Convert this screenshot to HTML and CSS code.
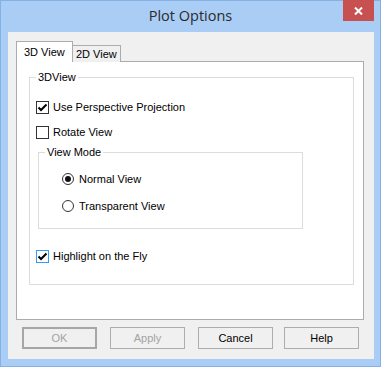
FILE: index.html
```html
<!DOCTYPE html>
<html>
<head>
<meta charset="utf-8">
<link rel="stylesheet" href="styles.css">
</head>
<body>
<div class="window">
  <div class="titlebar">
    <span></span>
    <span class="title">Plot Options</span>
    <span class="close"><svg width="9" height="8" viewBox="0 0 9 8"><path d="M1 0.5 L8 7.5 M8 0.5 L1 7.5" stroke="#fff" stroke-width="2"/></svg></span>
  </div>
  <div class="client">
    <div class="tabs">
      <div class="tab active">3D View</div>
      <div class="tab">2D View</div>
    </div>
    <div class="panel">
      <div class="group g1">
        <span class="gtitle">3DView</span>
        <label class="row r1"><span class="cb"><svg width="13" height="13" viewBox="0 0 13 13"><rect x="0.5" y="0.5" width="12" height="12" fill="#fff" stroke="#333"/><path d="M2.5 6.5 L5 9 L10.5 3.5" fill="none" stroke="#000" stroke-width="2"/></svg></span>Use Perspective Projection</label>
        <label class="row r2"><span class="cb"><svg width="13" height="13" viewBox="0 0 13 13"><rect x="0.5" y="0.5" width="12" height="12" fill="#fff" stroke="#333"/></svg></span>Rotate View</label>
        <div class="group g2">
          <span class="gtitle">View Mode</span>
          <label class="row rr1"><span class="rb"><svg width="12" height="12" viewBox="0 0 12 12"><circle cx="6" cy="6" r="5.5" fill="#fff" stroke="#333"/><circle cx="6" cy="6" r="3" fill="#111"/></svg></span>Normal View</label>
          <label class="row rr2"><span class="rb"><svg width="12" height="12" viewBox="0 0 12 12"><circle cx="6" cy="6" r="5.5" fill="#fff" stroke="#333"/></svg></span>Transparent View</label>
        </div>
        <label class="row r3"><span class="cb"><svg width="13" height="13" viewBox="0 0 13 13"><rect x="0.5" y="0.5" width="12" height="12" fill="#fff" stroke="#3399ff"/><path d="M2.5 6.5 L5 9 L10.5 3.5" fill="none" stroke="#000" stroke-width="2"/></svg></span>Highlight on the Fly</label>
      </div>
    </div>
    <div class="buttons">
      <div class="btn default disabled">OK</div>
      <div class="btn disabled">Apply</div>
      <div class="btn">Cancel</div>
      <div class="btn help">Help</div>
    </div>
  </div>
</div>
</body>
</html>
```
FILE: styles.css
```css
* { box-sizing: border-box; }
html, body { margin: 0; padding: 0; background: #fff; }
body { font-family: "Liberation Sans", Arial, sans-serif; font-size: 11px; color: #000; }
.window {
  width: 381px; height: 367px;
  background: #a9cdf4;
  border: 1px solid #85b2e3;
  display: flex; flex-direction: column;
}
.titlebar {
  height: 31px;
  display: grid;
  grid-template-columns: 1fr auto 1fr;
  align-items: start;
}
.title {
  font-family: "Open Sans", "Noto Sans", sans-serif;
  font-size: 14.5px;
  color: #2b2b2b;
  line-height: 20px;
  margin-top: 5px;
}
.close {
  justify-self: end;
  margin-right: 6px;
  margin-top: -1px;
  width: 31px; height: 21px;
  background: #c75050;
  display: flex; align-items: center; justify-content: center;
}
.close svg { display: block; }
.client {
  margin: 0 6px 0 7px;
  height: 327px;
  background: #f0f0f0;
  padding: 9px 0 0 8px;
}
.tabs {
  display: flex;
  align-items: flex-end;
  height: 21px;
  position: relative;
  z-index: 1;
}
.tab {
  height: 17px;
  width: 48px;
  border: 1px solid #acacac;
  border-bottom: none;
  border-left: none;
  background: #f0f0f0;
  padding-left: 3px;
  line-height: 16px;
}
.tab.active {
  height: 21px;
  width: 57px;
  border-left: 1px solid #acacac;
  background: #fff;
  padding-left: 7px;
  line-height: 20px;
}
.panel {
  margin-top: -1px;
  width: 348px;
  height: 259px;
  background: #fff;
  border: 1px solid #acacac;
  padding: 15px 0 0 12px;
}
.group {
  position: relative;
  border: 1px solid #dcdcdc;
}
.gtitle {
  position: absolute;
  top: -7px;
  left: 6px;
  padding: 0 2px;
  background: #fff;
  line-height: 13px;
}
.g1 {
  width: 325px;
  padding: 23px 0 21px 0;
  display: flex; flex-direction: column;
}
.g2 {
  width: 265px;
  margin-left: 8px;
  margin-top: 13px;
  padding: 20px 0 16px 23px;
  display: flex; flex-direction: column;
}
.row {
  display: flex;
  align-items: center;
  height: 13px;
  line-height: 13px;
  white-space: nowrap;
}
.r1, .r2, .r3 { margin-left: 6px; }
.r2 { margin-top: 12px; }
.r3 { margin-top: 21px; }
.rr1, .rr2 { height: 12px; }
.rr2 { margin-top: 15px; }
.cb { width: 13px; height: 13px; margin-right: 4px; }
.rb { width: 12px; height: 12px; margin-right: 5px; }
.cb svg, .rb svg { display: block; }
.buttons {
  display: flex;
  gap: 13px;
  margin-top: 7px;
  padding-left: 6px;
}
.btn {
  width: 75px; height: 22px;
  border: 1px solid #adadad;
  background: #f0f0f0;
  display: flex; align-items: center; justify-content: center;
}
.btn.default { border: 2px solid #a6a6a6; }
.btn.disabled { color: #a3a3a3; }
.btn.help { margin-left: -2px; }
```
